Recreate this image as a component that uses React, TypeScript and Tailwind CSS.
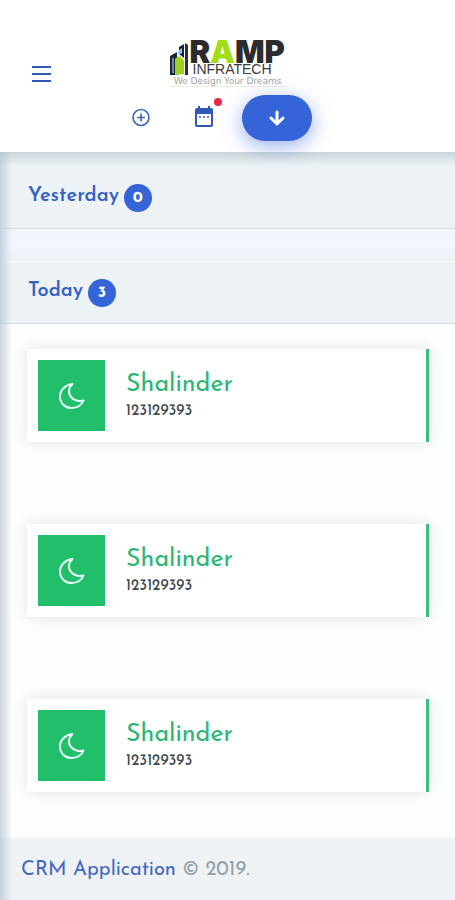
import { useState } from "react"

interface ILead {
    id: number
    name: string
    phone: string
}

const todayLeads: ILead[] = [
    { id: 1, name: "Shalinder", phone: "123129393" },
    { id: 2, name: "Shalinder", phone: "123129393" },
    { id: 3, name: "Shalinder", phone: "123129393" },
]

function Logo() {
    return (
        <a href="#" className="block w-[116px]">
            <div className="flex items-end">
                <svg viewBox="0 0 20 34" className="w-5 h-[34px] shrink-0" aria-hidden="true">
                    <path d="M0 14 7 10V33H0Z" fill="#17263f" />
                    <path d="M9 5 14 2V16L9 12Z" fill="#17263f" />
                    <path d="M8 9 12 6V11L8 13Z" fill="#9cc4e4" />
                    <path d="M15 1 18 3V33H15Z" fill="#26323c" />
                    <path d="M5 17 9 14 14 18V32L5 33Z" fill="#9fd01b" />
                    <path d="M3 16V31" stroke="#d7e5ef" strokeWidth="1" />
                </svg>
                <div>
                    <p className="font-['Inter',sans-serif] font-black text-[31px] leading-[23px] text-[#2c2c2e]">
                        R<span className="text-[#a2dc12]">A</span>MP
                    </p>
                    <p className="font-['Liberation_Sans',sans-serif] text-sm leading-[13px] pl-[3px] text-[#3c3c3e]">
                        INFRATECH
                    </p>
                </div>
            </div>
            <p className="font-['DejaVu_Sans',sans-serif] text-[9px] leading-[10px] whitespace-nowrap text-center text-[#a2a4a6] border-b border-[#e9ecdf]">
                We Design Your Dreams
            </p>
        </a>
    )
}

function Header() {
    return (
        <header className="bg-white pt-10 pb-[11px]">
            <div className="grid grid-cols-[1fr_auto_1fr] items-end px-8">
                <button type="button" aria-label="Menu" className="justify-self-start pb-1">
                    <svg viewBox="0 0 20 18" className="w-5 h-[18px]" stroke="#3158b4" strokeWidth="2">
                        <path d="M0 2H19M0 9H19M0 16H19" />
                    </svg>
                </button>
                <Logo />
            </div>
            <nav className="flex items-center justify-center pr-3 mt-2">
                <button type="button" aria-label="Add" className="mr-[43px]">
                    <svg viewBox="0 0 20 20" className="size-5" fill="none" stroke="#3e66bb" strokeWidth="1.6">
                        <circle cx="10" cy="9.5" r="8" />
                        <path d="M10 5.5V13.5M6 9.5H14" />
                    </svg>
                </button>
                <button type="button" aria-label="Calendar" className="relative mr-7">
                    <svg viewBox="0 0 20 24" className="w-5 h-6">
                        <path
                            d="M3 1H4V-1H6V1H14V-1H16V1H17Q19 1 19 3V18Q19 20 17 20H3Q1 20 1 18V3Q1 1 3 1ZM3 7V18H17V7Z"
                            fill="#3158b4"
                            fillRule="evenodd"
                            transform="translate(0 1)"
                        />
                        <path d="M5 11H7M9 11H11M13 11H15" stroke="#3158b4" strokeWidth="1.6" />
                    </svg>
                    <span className="absolute -top-2 -right-2 size-2 rounded-full bg-[#ee2447]" />
                </button>
                <button
                    type="button"
                    aria-label="Download"
                    className="relative z-10 flex items-center justify-center w-[70px] h-[46px] rounded-full bg-[#3464d8] shadow-[0_5px_20px_rgba(52,100,216,0.5)]"
                >
                    <svg viewBox="0 0 16 16" className="size-4" fill="none" stroke="white" strokeWidth="3" strokeLinecap="round" strokeLinejoin="round">
                        <path d="M8 2V13M2 8 8 14 14 8" />
                    </svg>
                </button>
            </nav>
        </header>
    )
}

function SectionTitle({ title, count }: { title: string, count: number }) {
    return (
        <h2 className="flex items-center gap-[5px] px-7 text-xl font-semibold text-[#3561c6]">
            {title}
            <span className="flex items-center justify-center size-7 mt-1 rounded-full bg-[#3464d8] text-base font-bold text-white">
                {count}
            </span>
        </h2>
    )
}

function LeadCard({ lead }: { lead: ILead }) {
    return (
        <article className="flex items-center gap-[21px] p-[11px] bg-white border-r-3 border-[#3fbd7d] shadow-[0_0_14px_rgba(60,80,110,0.16)]">
            <div className="flex items-center justify-center w-[67px] h-[71px] bg-[#21bf6b]">
                <svg viewBox="0 0 28 28" className="size-7" fill="none" stroke="#e6fff1" strokeWidth="2" strokeLinejoin="round">
                    <path d="M14.5 2C7 3 2 8 2 14.500C2 21 7 26 13.500 26C19 26 23.500 23.500 25.500 18.500C21 19.500 16.500 18.500 13.500 15.500C10 12 10 6 14.500 2Z" />
                </svg>
            </div>
            <div className="pt-1">
                <h3 className="text-[25px] leading-7 text-[#2bb673]">{lead.name}</h3>
                <p className="text-[15px] leading-[26px] font-medium text-[#404a50]">{lead.phone}</p>
            </div>
        </article>
    )
}

export default function App() {
    const [leads] = useState(todayLeads)

    return (
        <div className="flex flex-col min-h-screen bg-[#eef2f5] font-['Josefin_Sans','Lato',sans-serif]">
            <Header />
            <div className="relative flex flex-col grow">
                <div className="absolute inset-y-0 left-0 w-3 bg-linear-to-r from-[#b4c3d2]/70 to-transparent pointer-events-none" />
                <main>
                    <section className="pt-7 pb-4 border-b border-[#d3dade] bg-linear-to-b from-[#cad4d8] from-0% via-[#edf2f5] via-18% to-[#edf2f5]">
                        <SectionTitle title="Yesterday" count={0} />
                    </section>
                    <div className="h-8 bg-linear-to-b from-[#f1f6fb] via-[#f0f5ff] to-[#edf1f6]" />
                    <section>
                        <div className="pt-[13px] pb-4 border-t border-[#f7fafc] border-b border-b-[#d3d8da] bg-[#edf2f5]">
                            <SectionTitle title="Today" count={leads.length} />
                        </div>
                        <div className="flex flex-col gap-[82px] pr-[26px] pl-[27px] pt-[25px] pb-[46px] bg-[#fdfefe]">
                            {leads.map((lead) => (
                                <LeadCard key={lead.id} lead={lead} />
                            ))}
                        </div>
                    </section>
                </main>
                <footer className="px-[21px] py-[18px] text-xl text-[#95a1a9]">
                    <a href="#" className="text-[#4468c0]">CRM Application</a> © 2019.
                </footer>
            </div>
        </div>
    )
}
